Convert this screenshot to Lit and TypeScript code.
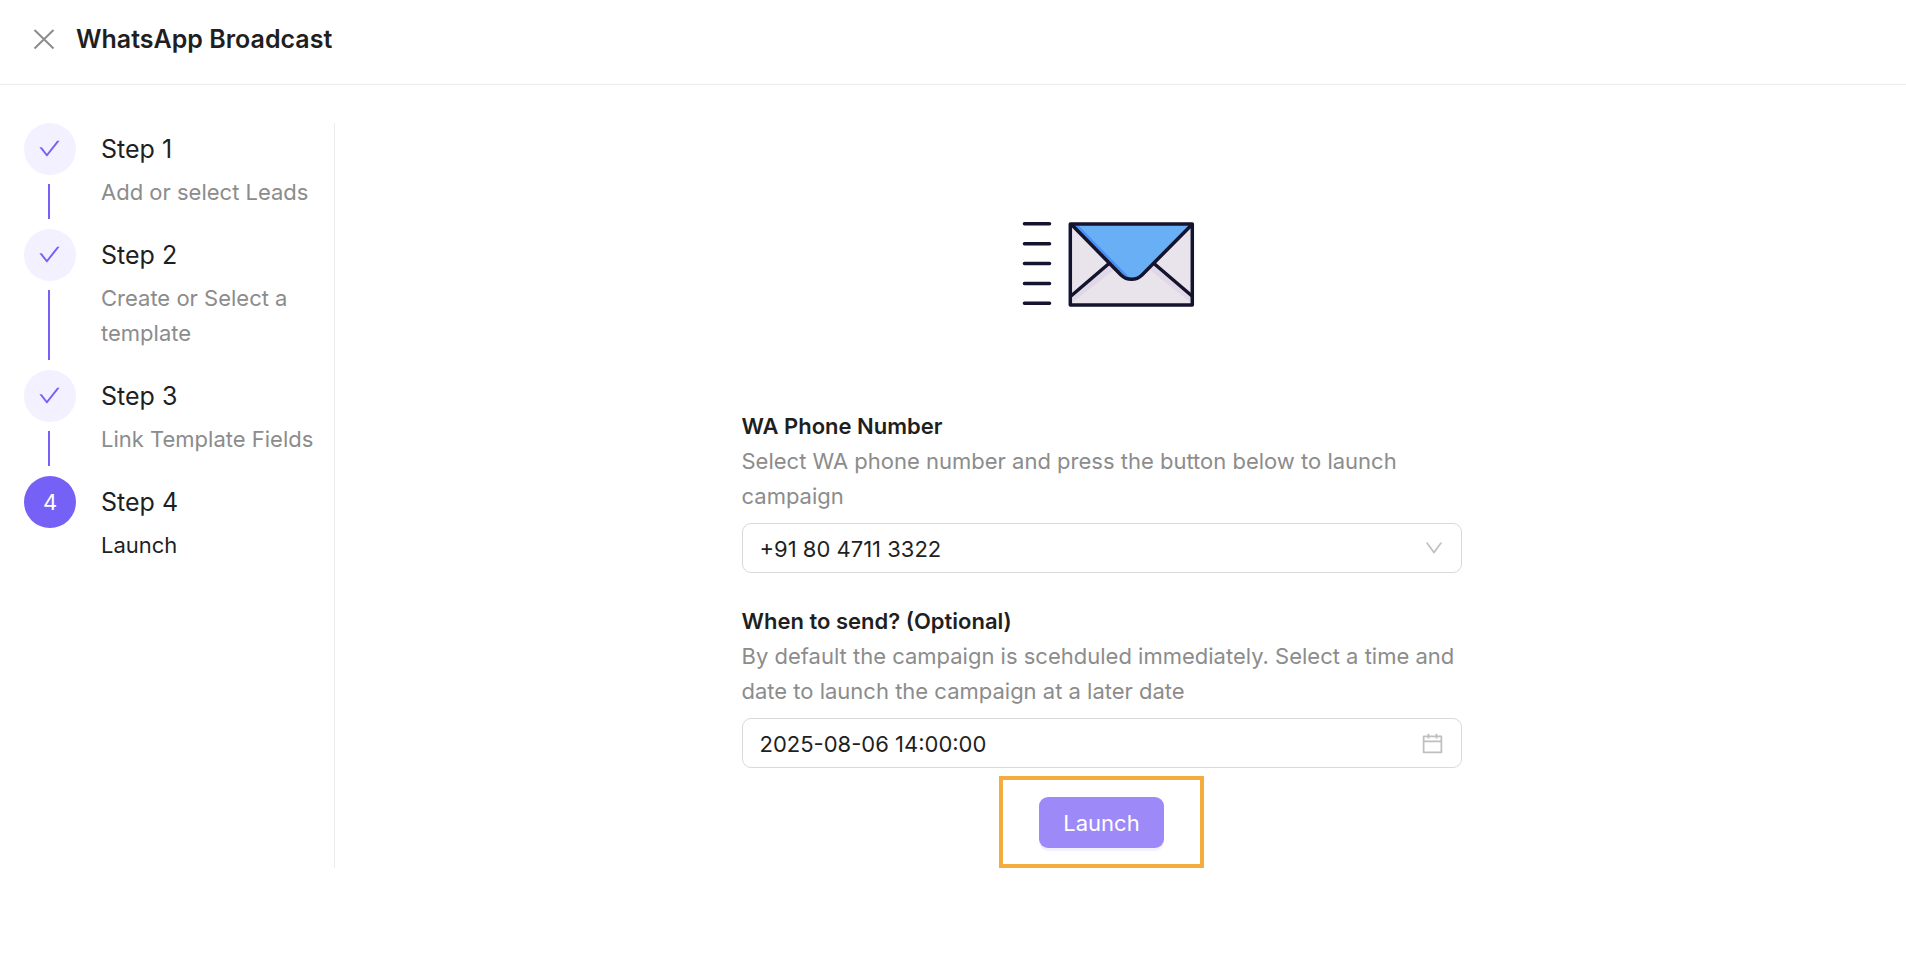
import { LitElement, html, css, svg, nothing } from "lit";
import { customElement, property, state } from "lit/decorators.js";

interface Step {
  title: string;
  description: string;
}

const STEPS: Step[] = [
  { title: "Step 1", description: "Add or select Leads" },
  { title: "Step 2", description: "Create or Select a template" },
  { title: "Step 3", description: "Link Template Fields" },
  { title: "Step 4", description: "Launch" },
];

const CHECK = svg`<path d="M912 190h-69.9c-9.8 0-19.1 4.5-25.1 12.2L404.7 724.5 207 474a32 32 0 00-25.1-12.2H112c-6.7 0-10.4 7.7-6.3 12.9l273.9 347c12.8 16.2 37.4 16.2 50.3 0l488.4-618.9c4.1-5.1.4-12.8-6.3-12.8z"/>`;
const DOWN = svg`<path d="M884 256h-75c-5.1 0-9.9 2.5-12.9 6.6L512 654.2 227.9 262.6c-3-4.1-7.8-6.6-12.9-6.6h-75c-6.5 0-10.3 7.4-6.5 12.7l352.6 486.1c12.8 17.6 39 17.6 51.7 0l352.6-486.1c3.9-5.3.1-12.7-6.4-12.7z"/>`;
const CALENDAR = svg`<path d="M880 184H712v-64c0-4.4-3.6-8-8-8h-56c-4.4 0-8 3.6-8 8v64H384v-64c0-4.4-3.6-8-8-8h-56c-4.4 0-8 3.6-8 8v64H144c-17.7 0-32 14.3-32 32v664c0 17.7 14.3 32 32 32h736c17.7 0 32-14.3 32-32V216c0-17.7-14.3-32-32-32zm-40 656H184V460h656v380zM184 392V256h128v48c0 4.4 3.6 8 8 8h56c4.4 0 8-3.6 8-8v-48h256v48c0 4.4 3.6 8 8 8h56c4.4 0 8-3.6 8-8v-48h128v136H184z"/>`;

/** Vertical list of wizard steps; everything before `current` is ticked off. */
@customElement("step-list")
export class StepList extends LitElement {
  @property({ attribute: false }) steps: Step[] = [];
  @property({ type: Number }) current = 0;

  static styles = css`
    :host {
      display: block;
    }
    .list {
      margin: 0;
      padding: 0;
      list-style: none;
    }
    .step {
      display: flex;
      gap: 25px;
    }
    .rail {
      flex: none;
      display: flex;
      flex-direction: column;
      align-items: center;
      width: 52px;
    }
    .dot {
      flex: none;
      display: flex;
      align-items: center;
      justify-content: center;
      width: 52px;
      height: 52px;
      border-radius: 50%;
      background: #f3f0ff;
      color: #7661f6;
      font-size: 22px;
    }
    .current .dot {
      background: #7661f6;
      color: #fff;
    }
    .line {
      flex: 1;
      width: 2px;
      margin: 9px 2px 10px 0;
      background: #7661f6;
    }
    .icon {
      width: 25px;
      height: 25px;
      margin: 0 1px 2px 0;
      fill: currentColor;
    }
    .text {
      padding-bottom: 19px;
    }
    .title {
      font-size: 25px;
      line-height: 52px;
    }
    .description {
      font-size: 22px;
      line-height: 35px;
      color: #8c8c8c;
    }
    .current .description {
      color: #1f1f1f;
    }
  `;

  render() {
    return html`<ol class="list">
      ${this.steps.map(
        (s, i) => html`<li class="step ${i === this.current ? "current" : ""}">
          <div class="rail">
            <span class="dot"
              >${i < this.current
                ? html`<svg class="icon" viewBox="0 0 1024 1024" aria-hidden="true">${CHECK}</svg>`
                : i + 1}</span
            >
            ${i < this.steps.length - 1 ? html`<span class="line"></span>` : nothing}
          </div>
          <div class="text">
            <div class="title">${s.title}</div>
            <div class="description">${s.description}</div>
          </div>
        </li>`
      )}
    </ol>`;
  }
}

@customElement("app-root")
export class AppRoot extends LitElement {
  @state() private sendAt = "2025-08-06 14:00:00";

  static styles = css`
    :host {
      display: block;
      min-height: 100vh;
      background: #fff;
      color: #1f1f1f;
      font-family: Inter, "Liberation Sans", sans-serif;
      font-size: 22px;
      line-height: 35px;
    }
    *,
    *::before {
      box-sizing: border-box;
    }
    .header {
      display: flex;
      align-items: center;
      gap: 19px;
      height: 85px;
      padding: 0 31px 5px;
      border-bottom: 1px solid #ececec;
    }
    .close {
      display: flex;
      padding: 0;
      border: 0;
      background: none;
      color: #8c8c8c;
    }
    .close-icon {
      width: 26px;
      height: 26px;
      fill: none;
      stroke: currentColor;
      stroke-width: 2;
    }
    .heading {
      margin: 0;
      font-size: 25px;
      font-weight: 600;
    }
    .body {
      display: flex;
      padding: 38px 38px 0 24px;
    }
    .sidebar {
      flex: none;
      width: 311px;
      padding-right: 16px;
      border-right: 1px solid #ececec;
    }
    .content {
      flex: 1;
      display: flex;
      justify-content: center;
    }
    .form {
      display: flex;
      flex-direction: column;
      width: 100%;
      max-width: 720px;
    }
    .art {
      align-self: center;
      width: 285px;
      height: 286px;
    }
    .field {
      margin-bottom: 31px;
    }
    .field.last {
      margin-bottom: 8px;
    }
    .label {
      display: block;
      font-weight: 600;
    }
    .hint {
      margin: 0 0 9px;
      color: #8c8c8c;
    }
    .box {
      display: grid;
      align-items: center;
    }
    .control {
      grid-area: 1 / 1;
      appearance: none;
      width: 100%;
      height: 50px;
      margin: 0;
      padding: 2px 56px 0 17px;
      border: 1px solid #d9d9d9;
      border-radius: 9px;
      background: #fff;
      color: inherit;
      font: inherit;
    }
    .suffix {
      grid-area: 1 / 1;
      justify-self: end;
      width: 25px;
      height: 25px;
      margin-right: 17px;
      fill: #bfbfbf;
      pointer-events: none;
    }
    .suffix.arrow {
      width: 22px;
      height: 22px;
    }
    .highlight {
      align-self: center;
      padding: 17px 36px 16px;
      border: 4px solid #f4ad3d;
    }
    .launch {
      display: block;
      height: 51px;
      padding: 2px 24px 0;
      border: 0;
      border-radius: 9px;
      background: #9d8af8;
      box-shadow: 0 3px 0 #f3f0ff;
      color: #fff;
      font: inherit;
    }
  `;

  private renderArt() {
    return html`<svg class="art" viewBox="0 0 285 286" role="img" aria-label="Envelope">
      <g fill="none" stroke="#14142f" stroke-width="3.600" stroke-linecap="round">
        <path d="M65.500 100.800h25M65.500 120.800h25M65.500 140.500h25M65.500 160.500h25M65.500 180.300h25" />
      </g>
      <rect x="111.500" y="101" width="122" height="81" fill="#e9e4ec" />
      <path d="M112 176L149 142l6 5-41 32zM233 176l-37-34-5 5 40 32z" fill="#e0d8e6" />
      <path d="M112 101h121l-51 51.500c-5.500 5-14 5-19.500 0z" fill="#68aff6" />
      <path d="M112 101h6l51 52c1.500 1.500 3 2.500 5 3-4 .5-8-1-11-4z" fill="#4b90f0" />
      <g fill="none" stroke="#14142f" stroke-width="3.500">
        <path d="M112 173l38-32.500M233 173l-38-32.500" />
        <path d="M112 101l50 51c6 5.800 15 5.800 21 0l50.500-51" />
        <rect x="111.300" y="101" width="122" height="81" stroke-linejoin="round" />
      </g>
    </svg>`;
  }

  render() {
    return html`
      <header class="header">
        <button class="close" type="button" aria-label="Close">
          <svg class="close-icon" viewBox="0 0 26 26"><path d="M3.500 3l19 18.500M22.500 3l-19 18.500" /></svg>
        </button>
        <h1 class="heading">WhatsApp Broadcast</h1>
      </header>
      <div class="body">
        <aside class="sidebar">
          <step-list .steps=${STEPS} .current=${3}></step-list>
        </aside>
        <main class="content">
          <form class="form" @submit=${(e: Event) => e.preventDefault()}>
            ${this.renderArt()}
            <div class="field">
              <label class="label" for="phone">WA Phone Number</label>
              <p class="hint" id="phone-hint">
                Select WA phone number and press the button below to launch campaign
              </p>
              <div class="box">
                <select class="control" id="phone" aria-describedby="phone-hint">
                  <option>+91 80 4711 3322</option>
                </select>
                <svg class="suffix arrow" viewBox="0 0 1024 1024" aria-hidden="true">${DOWN}</svg>
              </div>
            </div>
            <div class="field last">
              <label class="label" for="when">When to send? (Optional)</label>
              <p class="hint" id="when-hint">
                By default the campaign is scehduled immediately. Select a time and date to launch
                the campaign at a later date
              </p>
              <div class="box">
                <input
                  class="control"
                  id="when"
                  type="text"
                  aria-describedby="when-hint"
                  .value=${this.sendAt}
                  @input=${(e: Event) => (this.sendAt = (e.target as HTMLInputElement).value)}
                />
                <svg class="suffix" viewBox="0 0 1024 1024" aria-hidden="true">${CALENDAR}</svg>
              </div>
            </div>
            <div class="highlight">
              <button class="launch" type="submit">Launch</button>
            </div>
          </form>
        </main>
      </div>
    `;
  }
}
